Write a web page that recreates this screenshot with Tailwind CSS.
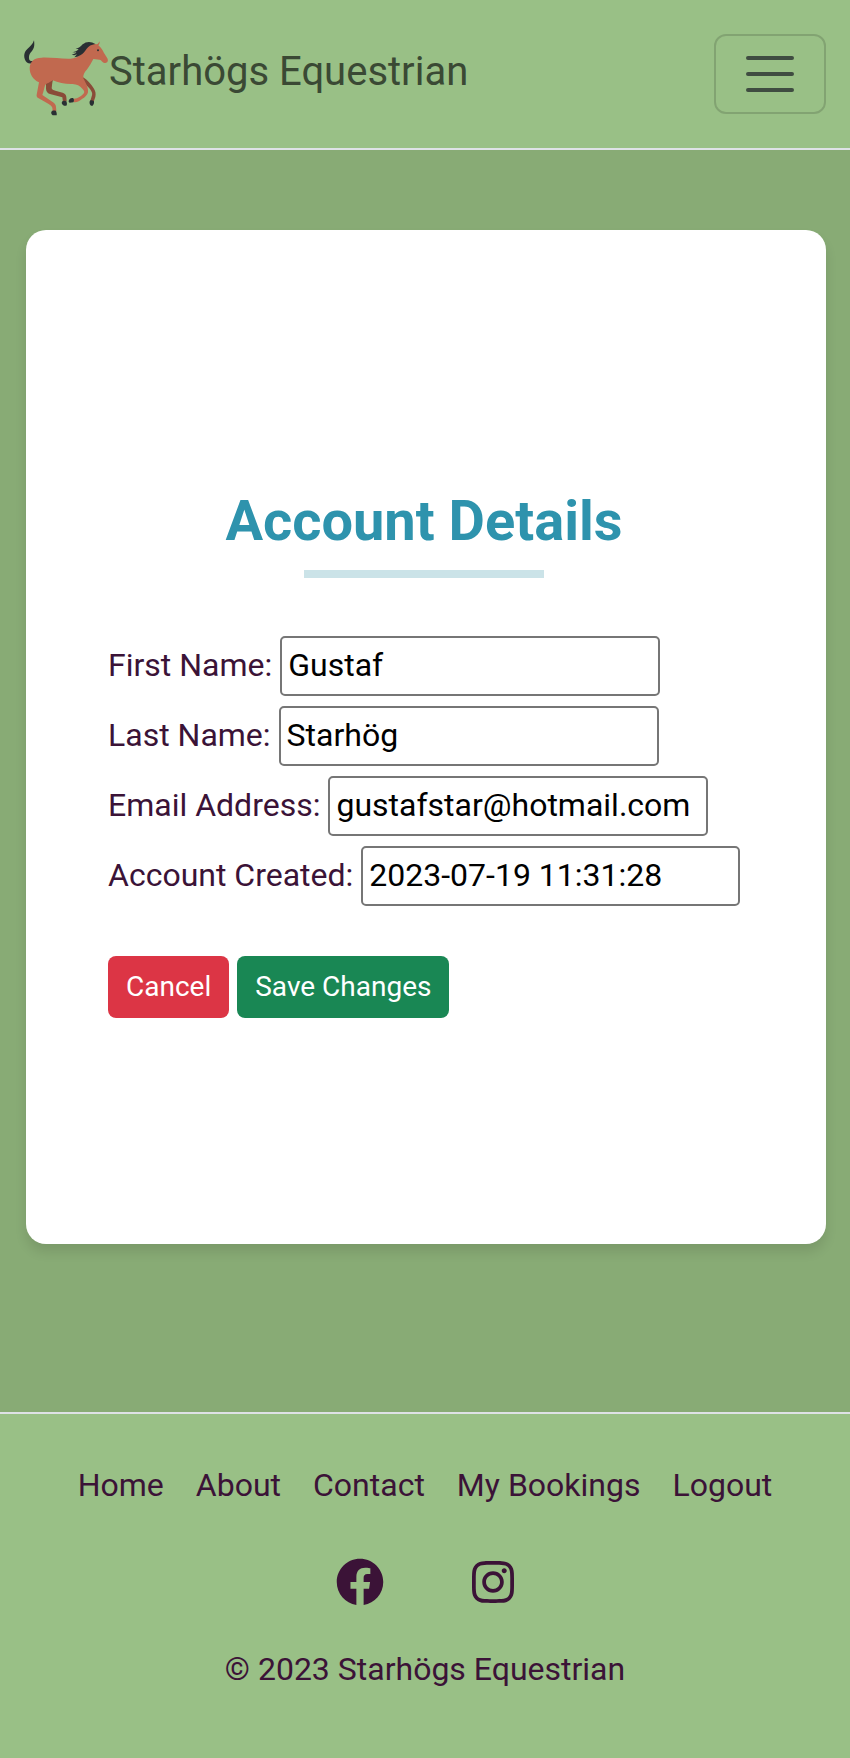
<!DOCTYPE html>
<html lang="en">
<head>
<meta charset="utf-8">
<meta name="viewport" content="width=device-width, initial-scale=1">
<title>Account Details – Starhögs Equestrian</title>
<script src="https://cdn.jsdelivr.net/npm/@tailwindcss/browser@4"></script>
</head>
<body class="bg-[#88ab75] font-['Roboto',sans-serif] text-[32px] leading-[48px] text-[#3b1337]">
<header class="flex items-center justify-between border-b-2 border-[#dee2e6] bg-[#99c086] px-6 pt-[31px] pb-8">
  <a href="#" class="flex items-center text-[40px] leading-[60px] text-[#3a4934]">
    <svg class="size-[85px] shrink-0" viewBox="12 -14 255 255" aria-hidden="true">
      <!-- far legs -->
      <path fill="#8a4b38" d="M78 142L99 132C96 142 96 152 95 158C97 163 101 164 106 165L128 171C135 173 139 178 139 184L140 197L129 199L127 185L90 175C81 173 78 166 78 158ZM188 124C202 132 214 146 221 158C227 167 228 175 226 184L221 198L211 195L216 179C218 172 215 167 210 160L190 138Z"/>
      <!-- tail -->
      <path fill="#292f33" d="M42 14C44 28 43 37 36 46C28 54 25 63 28 72C30 76 35 77 40 75C38 78 37 81 36 83C26 86 18 80 15 72C10 60 13 48 22 40C31 32 38 26 42 14Z"/>
      <!-- body, head and near legs -->
      <path fill="#c1694f" d="M29 97C30 78 42 66 65 66C95 65 125 70 152 69C174 68 186 54 195 40C203 27 215 22 230 26C234 25 236 22 238 17C240 22 238 26 235 29C242 34 247 42 252 52L262 68C266 76 262 82 256 82C250 83 246 78 243 74C237 71 229 72 220 70C214 82 208 92 202 100C192 110 189 118 190 128C196 140 206 156 204 170C200 184 186 190 176 197C170 200 164 200 160 199L162 189C174 189 186 180 192 172C194 167 192 164 187 159C180 150 170 146 158 145C138 146 115 141 98 134C90 140 82 143 76 147C72 157 71 168 67 178L98 199C104 203 108 208 108 214L109 226L98 227L97 216C95 210 90 208 86 205L56 188C51 185 49 182 50 177L57 140C39 132 29 115 29 97Z"/>
      <!-- mane -->
      <path fill="#292f33" d="M226 25C214 27 206 31 200 39C194 47 190 54 181 59C175 63 168 65 163 65L171 56C166 59 161 59 155 57C161 56 166 54 169 50C164 51 160 50 157 50C165 48 172 46 176 40C173 40 170 39 167 39C178 38 182 32 188 26C198 17 213 16 226 25Z"/>
      <!-- eye and hooves -->
      <circle cx="234" cy="44" r="3" fill="#292f33"/>
      <path fill="#292f33" d="M96 226C101 224 106 225 108 226C110 231 111 235 110 239H98C93 235 92 229 96 226ZM127 197C132 194 136 195 139 197C141 202 142 207 139 210H132C126 207 123 202 127 197ZM160 188C163 192 162 197 160 200L149 201C146 200 145 197 147 193C150 188 155 185 160 188ZM211 194C215 193 219 194 222 197C223 202 221 207 218 210H213C208 206 207 199 211 194Z"/>
    </svg>
    <span class="pb-1">Starhögs Equestrian</span>
  </a>
  <button type="button" aria-label="Toggle navigation" class="flex h-20 w-28 items-center justify-center rounded-xl border-2 border-black/15">
    <svg class="size-[60px]" viewBox="0 0 30 30" aria-hidden="true"><path stroke="#212529" stroke-opacity=".75" stroke-width="2" stroke-linecap="round" stroke-miterlimit="10" d="M4 7h22M4 15h22M4 23h22"/></svg>
  </button>
</header>

<main class="pt-20 pr-6 pb-[168px] pl-[26px]">
  <section class="mx-auto max-w-[800px] rounded-[20px] bg-white pt-[258px] pr-[86px] pb-[226px] pl-[82px] shadow-[0_8px_12px_rgba(0,0,0,0.1)]">
    <h1 class="text-center text-[56px] leading-[66px] font-bold text-[#2e93ad]">Account Details</h1>
    <div class="mx-auto mt-4 h-2 w-60 bg-[#cbe3e8]"></div>
    <form class="mt-[58px]">
      <div class="flex flex-col gap-2.5">
        <div class="flex items-center gap-2">
          <label for="first" class="shrink-0 pb-0.5">First Name:</label>
          <input id="first" type="text" value="Gustaf" class="h-[60px] w-[380px] min-w-0 rounded-[5px] border-2 border-[#767676] bg-white px-1.5 pb-0.5 text-black">
        </div>
        <div class="flex items-center gap-2">
          <label for="last" class="shrink-0 pb-0.5">Last Name:</label>
          <input id="last" type="text" value="Starhög" class="h-[60px] w-[380px] min-w-0 rounded-[5px] border-2 border-[#767676] bg-white px-1.5 pb-0.5 text-black">
        </div>
        <div class="flex items-center gap-2">
          <label for="email" class="shrink-0 pb-0.5">Email Address:</label>
          <input id="email" type="email" value="gustafstar@hotmail.com" class="h-[60px] w-[380px] min-w-0 rounded-[5px] border-2 border-[#767676] bg-white px-1.5 pb-0.5 text-black">
        </div>
        <div class="flex items-center gap-2">
          <label for="created" class="shrink-0 pb-0.5">Account Created:</label>
          <input id="created" type="text" value="2023-07-19 11:31:28" readonly class="h-[60px] w-[380px] min-w-0 rounded-[5px] border-2 border-[#767676] bg-white px-1.5 pb-0.5 text-black">
        </div>
      </div>
      <div class="mt-[50px] flex gap-2 text-[28px] leading-[42px] text-white">
        <button type="button" class="rounded-lg bg-[#dc3545] px-[18px] py-2.5">Cancel</button>
        <button type="submit" class="rounded-lg bg-[#198754] px-[18px] py-2.5">Save Changes</button>
      </div>
    </form>
  </section>
</main>

<footer class="flex flex-col items-center border-t-2 border-[#dee2e6] bg-[#99c086] px-6 pt-[47px] pb-[65px]">
  <nav class="flex flex-wrap justify-center gap-x-8">
    <a href="#">Home</a>
    <a href="#">About</a>
    <a href="#">Contact</a>
    <a href="#">My Bookings</a>
    <a href="#">Logout</a>
  </nav>
  <div class="mt-[49px] flex gap-[88px]">
    <a href="#" aria-label="Facebook"><svg class="h-12 w-12" viewBox="0 0 512 512" fill="currentColor" aria-hidden="true"><path d="M504 256C504 119 393 8 256 8S8 119 8 256c0 123.78 90.69 226.38 209.25 245V327.69h-63V256h63v-54.64c0-62.15 37-96.48 93.67-96.48 27.14 0 55.52 4.84 55.52 4.84v61h-31.28c-30.8 0-40.41 19.12-40.41 38.73V256h68.78l-11 71.69h-57.78V501C413.31 482.38 504 379.78 504 256z"/></svg></a>
    <a href="#" aria-label="Instagram"><svg class="h-12 w-[42px]" viewBox="0 0 448 512" fill="currentColor" aria-hidden="true"><path d="M224.1 141c-63.6 0-114.9 51.3-114.9 114.9s51.3 114.9 114.9 114.9S339 319.5 339 255.9 287.7 141 224.1 141zm0 189.6c-41.1 0-74.7-33.5-74.7-74.7s33.5-74.7 74.7-74.7 74.7 33.5 74.7 74.7-33.6 74.7-74.7 74.7zm146.4-194.3c0 14.9-12 26.8-26.8 26.8-14.9 0-26.8-12-26.8-26.8s12-26.8 26.8-26.8 26.8 12 26.8 26.8zm76.1 27.2c-1.7-35.9-9.9-67.7-36.2-93.9-26.2-26.2-58-34.4-93.9-36.2-37-2.1-147.9-2.1-184.9 0-35.8 1.7-67.6 9.9-93.9 36.1s-34.4 58-36.2 93.9c-2.1 37-2.1 147.9 0 184.9 1.7 35.9 9.9 67.7 36.2 93.9s58 34.4 93.9 36.2c37 2.1 147.9 2.1 184.9 0 35.9-1.7 67.7-9.9 93.9-36.2 26.2-26.2 34.4-58 36.2-93.9 2.1-37 2.1-147.8 0-184.8zM398.8 388c-7.8 19.6-22.9 34.7-42.6 42.6-29.5 11.7-99.5 9-132.1 9s-102.7 2.6-132.1-9c-19.6-7.8-34.7-22.9-42.6-42.6-11.7-29.5-9-99.5-9-132.1s-2.6-102.7 9-132.1c7.8-19.6 22.9-34.7 42.6-42.6 29.5-11.7 99.5-9 132.1-9s102.7-2.6 132.1 9c19.6 7.8 34.7 22.9 42.6 42.6 11.7 29.5 9 99.5 9 132.1s2.7 102.7-9 132.1z"/></svg></a>
  </div>
  <p class="mt-[39px]">© 2023 Starhögs Equestrian</p>
</footer>
</body>
</html>
